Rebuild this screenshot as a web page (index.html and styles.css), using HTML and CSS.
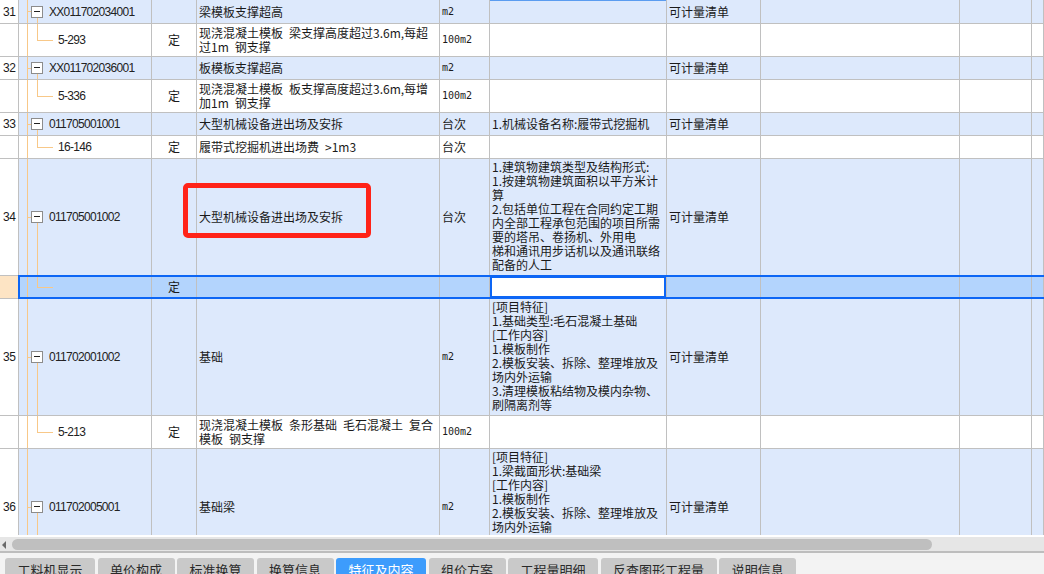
FILE: index.html
```html
<!DOCTYPE html>
<html lang="zh-CN">
<head>
    <meta charset="UTF-8">
    <title>清单特征及内容</title>
    <link rel="stylesheet" href="styles.css">
</head>
<body>
    <div class="sheet">
        <div class="grid">
            <div class="row main first">
                <div class="cell num">31</div>
                <div class="cell code parent"><span class="tog"></span>XX011702034001</div>
                <div class="cell type"></div>
                <div class="cell name">梁模板支撑超高</div>
                <div class="cell unit"><span class="lat">m2</span></div>
                <div class="cell feat prev"></div>
                <div class="cell note">可计量清单</div>
                <div class="cell"></div>
                <div class="cell"></div>
                <div class="cell"></div>
            </div>
            <div class="row two">
                <div class="cell num"></div>
                <div class="cell code child">5-293</div>
                <div class="cell type">定</div>
                <div class="cell name">现浇混凝土模板&ensp;梁支撑高度超过3.6m,每超<br>过1m&ensp;钢支撑</div>
                <div class="cell unit"><span class="lat">100m2</span></div>
                <div class="cell feat"></div>
                <div class="cell note"></div>
                <div class="cell"></div>
                <div class="cell"></div>
                <div class="cell"></div>
            </div>
            <div class="row main">
                <div class="cell num">32</div>
                <div class="cell code parent"><span class="tog"></span>XX011702036001</div>
                <div class="cell type"></div>
                <div class="cell name">板模板支撑超高</div>
                <div class="cell unit"><span class="lat">m2</span></div>
                <div class="cell feat"></div>
                <div class="cell note">可计量清单</div>
                <div class="cell"></div>
                <div class="cell"></div>
                <div class="cell"></div>
            </div>
            <div class="row two">
                <div class="cell num"></div>
                <div class="cell code child">5-336</div>
                <div class="cell type">定</div>
                <div class="cell name">现浇混凝土模板&ensp;板支撑高度超过3.6m,每增<br>加1m&ensp;钢支撑</div>
                <div class="cell unit"><span class="lat">100m2</span></div>
                <div class="cell feat"></div>
                <div class="cell note"></div>
                <div class="cell"></div>
                <div class="cell"></div>
                <div class="cell"></div>
            </div>
            <div class="row main">
                <div class="cell num">33</div>
                <div class="cell code parent"><span class="tog"></span>011705001001</div>
                <div class="cell type"></div>
                <div class="cell name">大型机械设备进出场及安拆</div>
                <div class="cell unit">台次</div>
                <div class="cell feat">1.机械设备名称:履带式挖掘机</div>
                <div class="cell note">可计量清单</div>
                <div class="cell"></div>
                <div class="cell"></div>
                <div class="cell"></div>
            </div>
            <div class="row">
                <div class="cell num"></div>
                <div class="cell code child">16-146</div>
                <div class="cell type">定</div>
                <div class="cell name">履带式挖掘机进出场费&ensp;&gt;1m3</div>
                <div class="cell unit">台次</div>
                <div class="cell feat"></div>
                <div class="cell note"></div>
                <div class="cell"></div>
                <div class="cell"></div>
                <div class="cell"></div>
            </div>
            <div class="row main tall">
                <div class="cell num">34</div>
                <div class="cell code parent"><span class="tog"></span>011705001002</div>
                <div class="cell type"></div>
                <div class="cell name">大型机械设备进出场及安拆</div>
                <div class="cell unit">台次</div>
                <div class="cell feat top">1.建筑物建筑类型及结构形式:<br>1.按建筑物建筑面积以平方米计<br>算<br>2.包括单位工程在合同约定工期<br>内全部工程承包范围的项目所需<br>要的塔吊、卷扬机、外用电<br>梯和通讯用步话机以及通讯联络<br>配备的人工</div>
                <div class="cell note">可计量清单</div>
                <div class="cell"></div>
                <div class="cell"></div>
                <div class="cell"></div>
            </div>
            <div class="row sel">
                <div class="cell num"></div>
                <div class="cell code child"></div>
                <div class="cell type">定</div>
                <div class="cell name"></div>
                <div class="cell unit"></div>
                <div class="cell feat cur"></div>
                <div class="cell note"></div>
                <div class="cell"></div>
                <div class="cell"></div>
                <div class="cell"></div>
            </div>
            <div class="row main tall">
                <div class="cell num">35</div>
                <div class="cell code parent"><span class="tog"></span>011702001002</div>
                <div class="cell type"></div>
                <div class="cell name">基础</div>
                <div class="cell unit"><span class="lat">m2</span></div>
                <div class="cell feat top">[项目特征]<br>1.基础类型:毛石混凝土基础<br>[工作内容]<br>1.模板制作<br>2.模板安装、拆除、整理堆放及<br>场内外运输<br>3.清理模板粘结物及模内杂物、<br>刷隔离剂等</div>
                <div class="cell note">可计量清单</div>
                <div class="cell"></div>
                <div class="cell"></div>
                <div class="cell"></div>
            </div>
            <div class="row two">
                <div class="cell num"></div>
                <div class="cell code child">5-213</div>
                <div class="cell type">定</div>
                <div class="cell name">现浇混凝土模板&ensp;条形基础&ensp;毛石混凝土&ensp;复合<br>模板&ensp;钢支撑</div>
                <div class="cell unit"><span class="lat">100m2</span></div>
                <div class="cell feat"></div>
                <div class="cell note"></div>
                <div class="cell"></div>
                <div class="cell"></div>
                <div class="cell"></div>
            </div>
            <div class="row main tall">
                <div class="cell num">36</div>
                <div class="cell code parent"><span class="tog"></span>011702005001</div>
                <div class="cell type"></div>
                <div class="cell name">基础梁</div>
                <div class="cell unit"><span class="lat">m2</span></div>
                <div class="cell feat top">[项目特征]<br>1.梁截面形状:基础梁<br>[工作内容]<br>1.模板制作<br>2.模板安装、拆除、整理堆放及<br>场内外运输<br>3.清理模板粘结物及模内杂物、<br>刷隔离剂等</div>
                <div class="cell note">可计量清单</div>
                <div class="cell"></div>
                <div class="cell"></div>
                <div class="cell"></div>
            </div>
        </div>
        <div class="mark"></div>
    </div>

    <div class="hscroll">
        <span class="arrow"></span>
        <span class="thumb"></span>
    </div>

    <div class="tabs">
        <div class="tab">工料机显示</div>
        <div class="tab">单价构成</div>
        <div class="tab">标准换算</div>
        <div class="tab">换算信息</div>
        <div class="tab active">特征及内容</div>
        <div class="tab">组价方案</div>
        <div class="tab">工程量明细</div>
        <div class="tab">反查图形工程量</div>
        <div class="tab">说明信息</div>
    </div>
</body>
</html>
```

FILE: styles.css
```css
body {
    margin: 0;
    width: 1044px;
    height: 574px;
    overflow: hidden;
    background: #fff;
    font-family: "Noto Sans CJK SC", sans-serif;
    font-size: 12px;
    color: #1a1a1a;
}

.sheet {
    position: relative;
    height: 535px;
    overflow: hidden;
}

.row {
    display: grid;
    grid-template-columns: 19px 133px 45px 243px 50px 177px 94px 199px 72px 1fr;
    height: 23px;
}

.row.first {
    height: 24px;
}

.row.two {
    height: 33px;
}

.row.tall {
    height: 117px;
}

.cell {
    display: flex;
    align-items: center;
    box-sizing: border-box;
    padding: 0 2px;
    border-right: 1px solid #c0c0c0;
    border-bottom: 1px solid #c0c0c0;
    line-height: 14px;
    white-space: nowrap;
    overflow: hidden;
}

.main .cell {
    background-color: #dde9fc;
}

.main .cell.num,
.cell.num {
    background-color: #fff;
    font-family: "Liberation Sans", sans-serif;
    letter-spacing: -0.5px;
    padding-left: 3px;
}

/* tree column */
.code {
    font-family: "Liberation Sans", sans-serif;
    letter-spacing: -0.7px;
    color: #222;
    padding-left: 12px;
    background-image: linear-gradient(#f8c888, #f8c888);
    background-position: 8px 0;
    background-size: 1px 100%;
    background-repeat: no-repeat;
}

.code.parent {
    background-image: linear-gradient(#f8c888, #f8c888),
                      linear-gradient(#f8c888, #f8c888),
                      linear-gradient(#f8c888, #f8c888);
    background-position: 8px 0, 8px 50%, 18px 100%;
    background-size: 1px 100%, 4px 1px, 1px 50%;
}

.code.child {
    padding-left: 39px;
    background-image: linear-gradient(#f8c888, #f8c888),
                      linear-gradient(#f8c888, #f8c888),
                      linear-gradient(#f8c888, #f8c888);
    background-position: 8px 0, 18px 0, 18px 50%;
    background-size: 1px 100%, 1px 50%, 16px 1px;
}

.tog {
    position: relative;
    flex: none;
    width: 12px;
    height: 12px;
    box-sizing: border-box;
    margin-right: 6px;
    border: 1px solid #8c8c8c;
    background: #fff;
}

.tog::before {
    content: '';
    position: absolute;
    left: 2px;
    right: 2px;
    top: 4px;
    height: 1px;
    background: #222;
}

.type {
    justify-content: center;
}

.lat {
    font-family: "DejaVu Sans Mono", monospace;
    font-size: 10px;
}

.feat.top {
    align-items: flex-start;
    padding-top: 1px;
    white-space: normal;
}

.feat.prev {
    box-shadow: inset 0 1px 0 #5a9cf0;
}

/* current row */
.row.sel {
    position: relative;
}

.sel .cell {
    background-color: #b3d4fd;
}

.sel .cell.num {
    background-color: #fde4c4;
}

.sel .cell.cur {
    background-color: #fff;
    box-shadow: inset 0 0 0 2px #0d66f5;
}

.row.sel::after {
    content: '';
    position: absolute;
    left: 18px;
    right: -4px;
    top: -1px;
    bottom: 0;
    border: 2px solid #0d66f5;
    pointer-events: none;
}

.mark {
    position: absolute;
    left: 183px;
    top: 183px;
    width: 188px;
    height: 55px;
    box-sizing: border-box;
    border: 5px solid #ff2318;
    border-radius: 5px;
}

/* scrollbar */
.hscroll {
    position: relative;
    height: 14px;
    margin-top: 2px;
    background: #e6e6e6;
}

.arrow {
    position: absolute;
    left: 2px;
    top: 4px;
    border-top: 4px solid transparent;
    border-bottom: 4px solid transparent;
    border-right: 4px solid #6a6a6a;
}

.thumb {
    position: absolute;
    left: 12px;
    top: 2px;
    width: 920px;
    height: 11px;
    border-radius: 6px;
    background: #bfbfbf;
}

/* bottom tabs */
.tabs {
    display: flex;
    gap: 2.5px;
    height: 21px;
    padding: 5px 0 0 5px;
    border-top: 2px solid #bdbdbd;
    background: #f3f3f3;
    overflow: hidden;
}

.tab {
    height: 24px;
    line-height: 24px;
    padding: 0 12.5px;
    border-radius: 3px 3px 0 0;
    background: #c9c9c9;
    color: #2a2a2a;
    font-size: 13px;
}

.tab.active {
    background: #3d9cfc;
    color: #fff;
}
```
